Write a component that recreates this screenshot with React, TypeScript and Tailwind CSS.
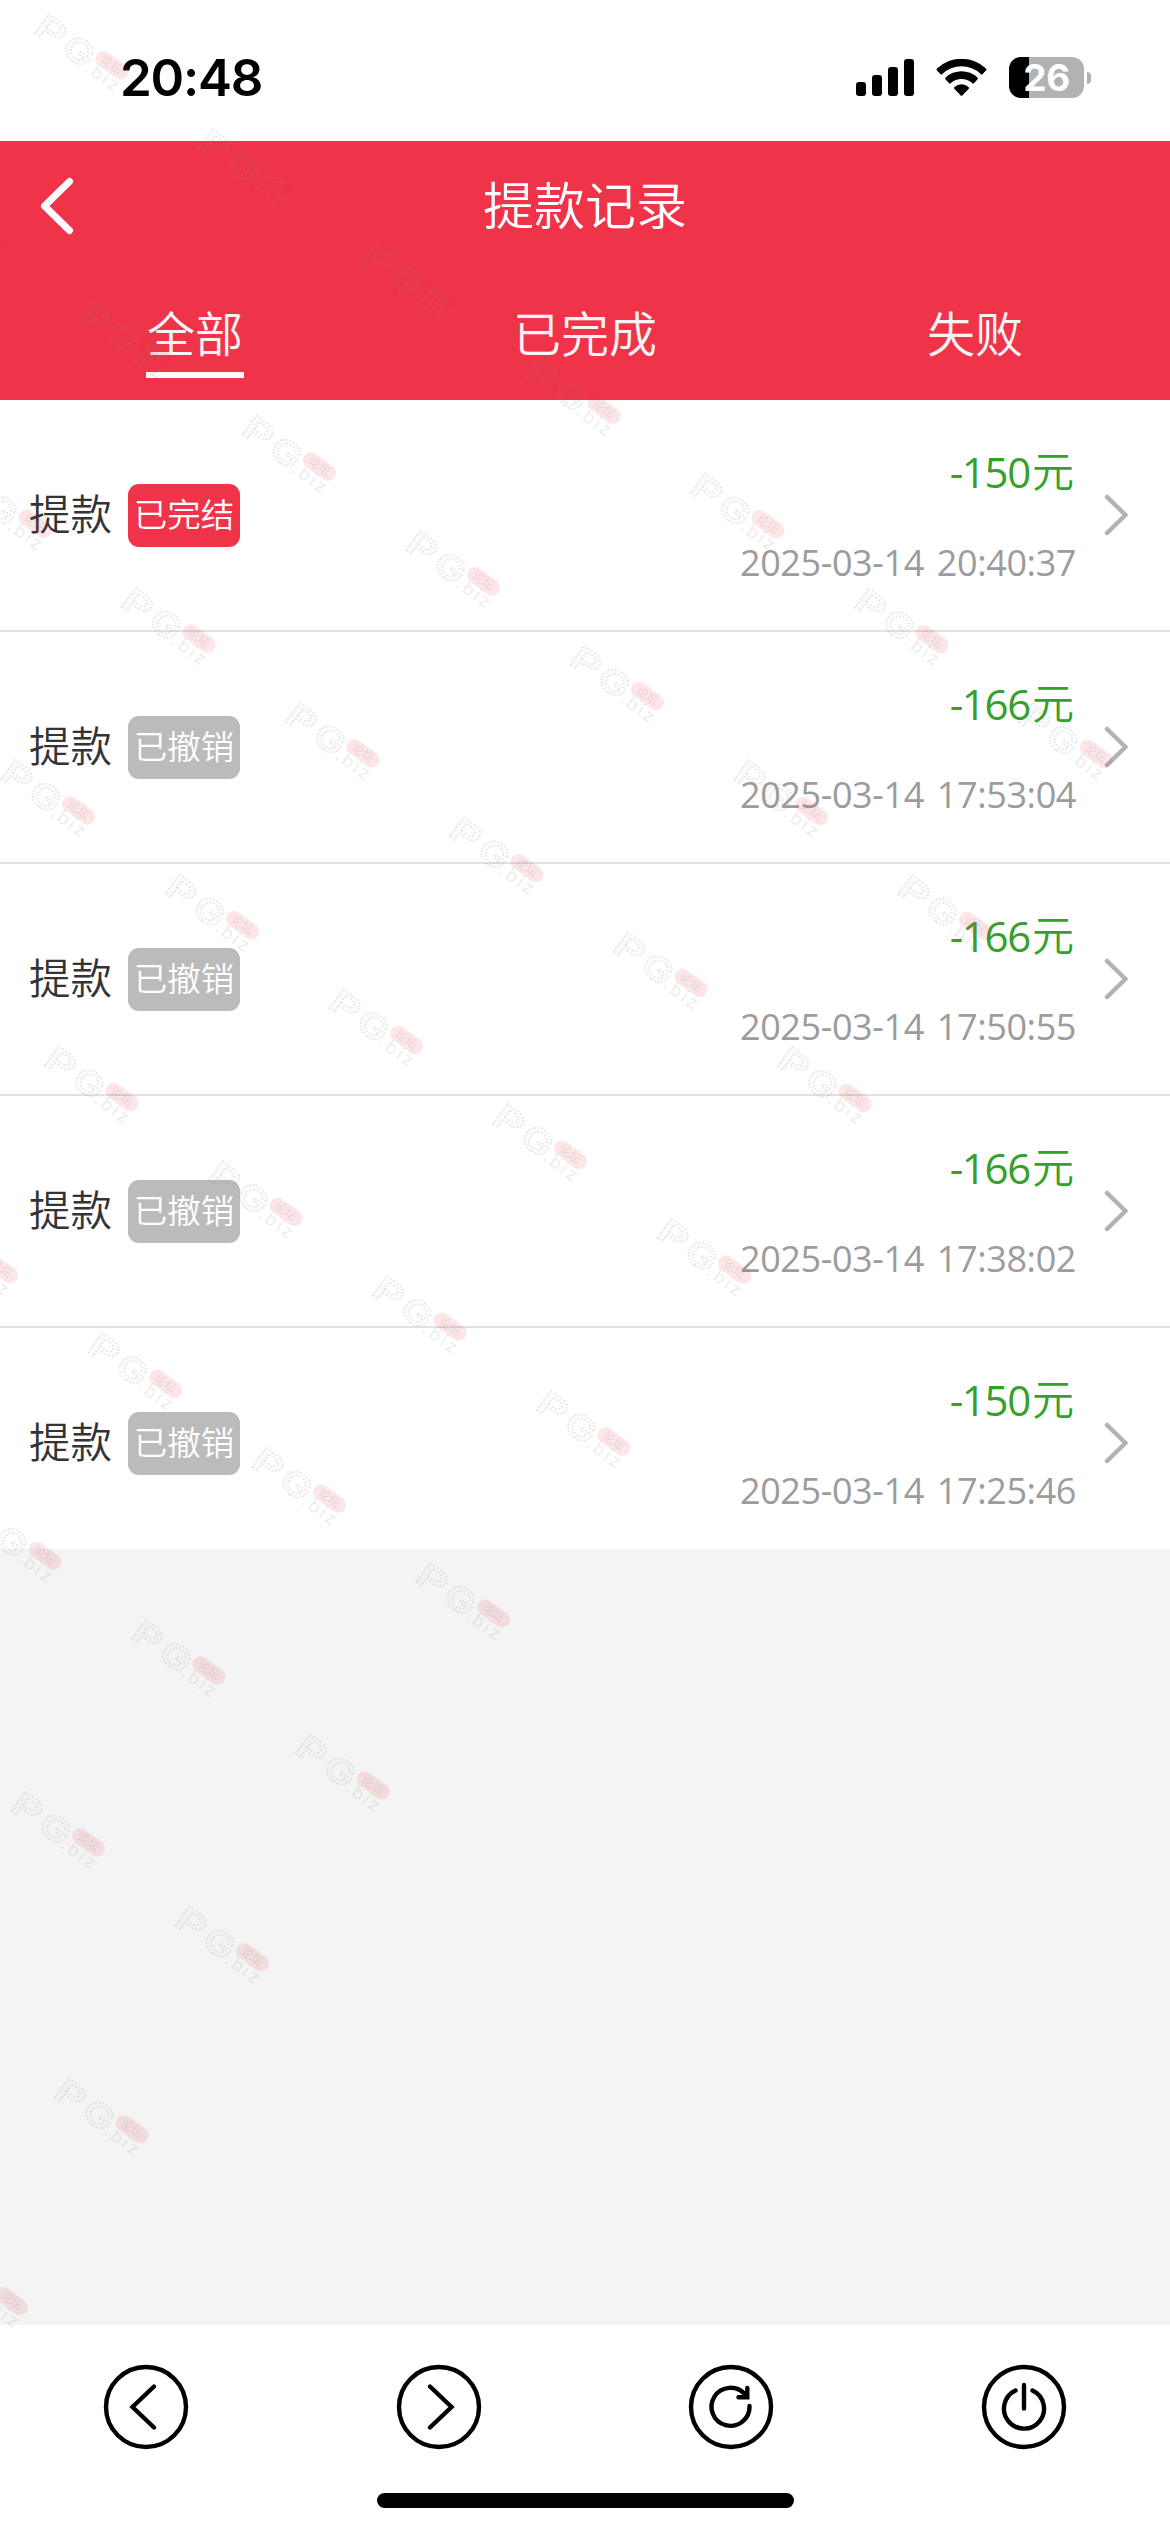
import React, { useState } from "react";

interface WithdrawRecord {
  id: number;
  title: string;
  status: "done" | "cancelled";
  amount: string;
  time: string;
}

const records: WithdrawRecord[] = [
  { id: 1, title: "提款", status: "done", amount: "-150", time: "2025-03-14 20:40:37" },
  { id: 2, title: "提款", status: "cancelled", amount: "-166", time: "2025-03-14 17:53:04" },
  { id: 3, title: "提款", status: "cancelled", amount: "-166", time: "2025-03-14 17:50:55" },
  { id: 4, title: "提款", status: "cancelled", amount: "-166", time: "2025-03-14 17:38:02" },
  { id: 5, title: "提款", status: "cancelled", amount: "-150", time: "2025-03-14 17:25:46" },
];

const statusLabel = { done: "已完结", cancelled: "已撤销" };
const statusColor = { done: "bg-[#ef3449]", cancelled: "bg-[#bbbbbb]" };

const tabs = ["全部", "已完成", "失败"];

const StatusBar: React.FC = () => (
  <div className="flex h-[141px] shrink-0 items-start justify-between bg-white pl-[120px] pr-[79px] pt-[57px] font-['Inter',sans-serif]">
    <span className="text-[51px] font-semibold leading-[42px] tracking-[-1.2px] text-black">
      20:48
    </span>
    <div className="flex items-start">
      <svg className="mt-[2px] h-[37px] w-[58px]" viewBox="0 0 58 37">
        <rect x="0" y="23" width="10" height="14" rx="3" />
        <rect x="16" y="16" width="10" height="21" rx="3" />
        <rect x="32" y="8" width="10" height="29" rx="3" />
        <rect x="48" y="0" width="10" height="37" rx="3" />
      </svg>
      <svg className="ml-[22px] mt-[2px] h-[37px] w-[51px]" viewBox="0 0 51 37">
        <path d="M1 9.6a35.5 35.5 0 0 1 49 0q1 1 0 2l-3.3 3.3q-1 1-2 0a28.2 28.2 0 0 0-38.4 0q-1 1-2 0L1 11.600q-1-1 0-2z" />
        <path d="M9.600 18.600a23 23 0 0 1 31.800 0q1 1 0 2l-3.300 3.300q-1 1-2 0a16 16 0 0 0-21.200 0q-1 1-2 0l-3.300-3.300q-1-1 0-2z" />
        <path d="M18.500 28a10.300 10.300 0 0 1 14 0q1 1 0 2l-6 6.200q-1 1-2 0l-6-6.200q-1-1 0-2z" />
      </svg>
      <div className="ml-[22px] flex items-center">
        <div className="flex h-[41px] w-[75px] items-center justify-center rounded-[12px] bg-[linear-gradient(to_right,#000_20px,#b2b2b2_20px)]">
          <span className="text-[37px] font-bold leading-none tracking-[-0.5px] text-white">26</span>
        </div>
        <div className="ml-[3px] h-[12px] w-[4px] rounded-r-full bg-[#b2b2b2]" />
      </div>
    </div>
  </div>
);

const Header: React.FC<{ active: number; onChange: (i: number) => void }> = ({
  active,
  onChange,
}) => (
  <header className="flex h-[259px] shrink-0 flex-col bg-[#ef3449] text-white">
    <div className="grid h-[131px] grid-cols-[120px_1fr_120px] items-center">
      <button className="pb-[2px] pl-[40px]">
        <svg className="h-[58px] w-[34px]" viewBox="0 0 34 58" fill="none">
          <path
            d="M29.500 4.500L4.500 29L29.500 53.500"
            stroke="#fff"
            strokeWidth="7"
            strokeLinecap="round"
            strokeLinejoin="round"
          />
        </svg>
      </button>
      <h1 className="pb-[6px] text-center text-[51px] font-[350] leading-none">提款记录</h1>
      <span />
    </div>
    <nav className="grid h-[128px] grid-cols-3">
      {tabs.map((tab, i) => (
        <button
          key={tab}
          onClick={() => onChange(i)}
          className="flex flex-col items-center pt-[34px] text-[48px] font-[350] leading-[50px] text-[#f8f4f5]"
        >
          {tab}
          {active === i && <i className="mt-[16px] h-[6px] w-[98px] bg-[#fffafa]" />}
        </button>
      ))}
    </nav>
  </header>
);

const RecordRow: React.FC<{ record: WithdrawRecord }> = ({ record }) => (
  <li className="flex h-[232px] justify-between border-b-2 border-[#e1e1e1] bg-white pl-[29px] pr-[41px] last:h-[221px] last:border-b-0">
    <div className="flex h-[230px] items-center">
      <span className="pb-[4px] text-[41.5px] font-[350] leading-none text-[#333]">{record.title}</span>
      <span
        className={`ml-[16px] flex h-[63px] w-[112px] items-center justify-center rounded-[11px] text-[33.5px] font-[350] leading-none text-white ${statusColor[record.status]}`}
      >
        <span className="pb-[5px]">{statusLabel[record.status]}</span>
      </span>
    </div>
    <div className="flex h-[230px] items-center">
      <div className="flex flex-col items-end pb-[4px] font-['Open_Sans','Noto_Sans_CJK_SC',sans-serif] font-normal">
        <span className="mr-[-1px] text-[42px] leading-[60px] tracking-[-1.3px] text-[#36a02c]">
          {record.amount}
          <span className="relative top-[-1px] ml-[2px] font-['Noto_Sans_CJK_SC',sans-serif] font-[350] tracking-normal">
            元
          </span>
        </span>
        <span className="mr-[-3px] mt-[37px] text-[36px] leading-[48px] tracking-[-0.4px] text-[#9c9c9c] [word-spacing:4px]">
          {record.time}
        </span>
      </div>
      <svg className="ml-[31px] h-[42px] w-[25px]" viewBox="0 0 25 42" fill="none">
        <path
          d="M3 3L21.500 21L3 39"
          stroke="#b2b2b2"
          strokeWidth="4.500"
          strokeLinecap="round"
          strokeLinejoin="round"
        />
      </svg>
    </div>
  </li>
);

const toolbarIcons = [
  <path key="back" d="M51 22.500L29.500 43L51 63.500" />,
  <path key="forward" d="M34 22.500L55.500 43L34 63.500" />,
  <g key="reload">
    <path d="M61.500 42A19 19 0 1 1 57 30.500" />
    <path d="M59.300 24V33.200H50.500" />
  </g>,
  <g key="power">
    <path d="M34.500 26.500A20 20 0 1 0 51.500 26.500" />
    <path d="M43 21V44.500" />
  </g>,
];

const Toolbar: React.FC = () => (
  <footer className="flex h-[207px] shrink-0 flex-col items-center bg-white">
    <div className="grid w-full grid-cols-4 pt-[39px]">
      {toolbarIcons.map((icon, i) => (
        <button key={i} className="flex justify-center">
          <svg
            className="size-[86px]"
            viewBox="0 0 86 86"
            fill="none"
            stroke="#000"
            strokeWidth="4.400"
            strokeLinecap="round"
          >
            <circle cx="43" cy="43" r="40" />
            {icon}
          </svg>
        </button>
      ))}
    </div>
    <div className="mt-[43px] h-[15px] w-[417px] rounded-full bg-black" />
  </footer>
);

// Slanted lattice of logo stamps laid over the whole screen
const stamps: { x: number; y: number }[] = [];
for (let row = 0; row < 10; row++) {
  for (let col = 0; col < 7; col++) {
    const x = 33.2 + col * 164 - row * 120.5;
    const y = 13 + col * 114.8 + row * 171.9;
    if (x > -100) stamps.push({ x, y });
  }
}

const Watermark: React.FC = () => (
  <svg
    className="pointer-events-none absolute inset-0 h-full w-full"
    viewBox="0 0 1170 2532"
    fontFamily="Inter, 'Noto Sans CJK SC', sans-serif"
  >
    {stamps.map((s) => (
      <g key={`${s.x}-${s.y}`} transform={`translate(${s.x} ${s.y + 22}) rotate(36)`}>
        <g
          fill="#999"
          fillOpacity="0.03"
          stroke="#888"
          strokeOpacity="0.24"
          strokeWidth="1.400"
          strokeDasharray="1.500 1.500"
          fontSize="33"
          fontWeight="600"
        >
          <text transform="translate(-3 -2) scale(1.400 1)">P</text>
          <text transform="translate(31 -2) scale(1.250 1)">G</text>
        </g>
        <text x="61" y="-1" fontSize="18" letterSpacing="2.500" fill="#888" fillOpacity="0.17">.biz</text>
        <rect x="63" y="-30" width="37" height="16" rx="8" fill="#f0303c" fillOpacity="0.12" />
        <text x="69" y="-18" fontSize="12" fill="#888" fillOpacity="0.2">论坛</text>
      </g>
    ))}
  </svg>
);

const App: React.FC = () => {
  const [active, setActive] = useState(0);

  return (
    <div className="relative flex h-[2532px] w-[1170px] flex-col overflow-hidden bg-[#f4f4f4] font-['Noto_Sans_CJK_SC',sans-serif]">
      <StatusBar />
      <Header active={active} onChange={setActive} />
      <main className="flex-1">
        <ul>
          {records.map((record) => (
            <RecordRow key={record.id} record={record} />
          ))}
        </ul>
      </main>
      <Toolbar />
      <Watermark />
    </div>
  );
};

export default App;
